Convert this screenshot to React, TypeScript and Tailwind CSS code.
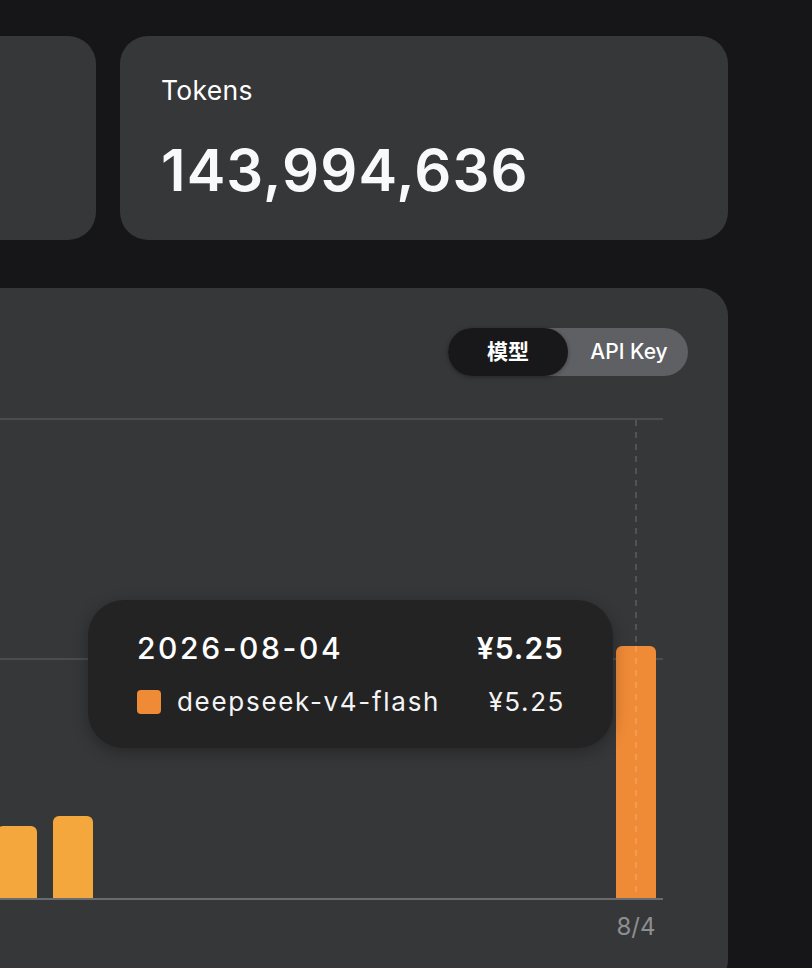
import React from "react";

export default function App() {
  return (
    <div
      className="w-[812px] h-[968px] overflow-hidden bg-[#161618] text-white"
      style={{ fontFamily: "Inter, 'Noto Sans CJK SC', sans-serif" }}
    >
      <div className="ml-[-512px] w-[1240px] pt-[36px] flex flex-col gap-[48px]">
        {/* Top stat cards */}
        <div className="flex gap-[24px]">
          <div className="w-[608px] h-[204px] rounded-[28px] bg-[#363739]" />
          <div className="w-[608px] h-[204px] rounded-[28px] bg-[#363739] pl-[41px] pt-[38px]">
            <div className="text-[26.5px] leading-[32px] font-normal text-white tracking-[0.3px]">Tokens</div>
            <div className="mt-[32px] text-[58px] leading-[64px] font-semibold text-[#f8f9fb] tracking-[1.1px]">
              143,994,636
            </div>
          </div>
        </div>

        {/* Chart card */}
        <div className="relative w-[1240px] h-[700px] rounded-[28px] bg-[#363739] pt-[40px]">
          <div className="flex justify-end pr-[40px]">
            <div className="flex h-[48px] rounded-full bg-[#5e6064]">
              <div className="w-[120px] h-[48px] rounded-full bg-[#18181a] shadow-[0_1px_4px_rgba(0,0,0,0.35)] flex items-center justify-center text-[21px] font-bold text-white">
                模型
              </div>
              <div className="w-[120px] h-[48px] flex items-center justify-center text-[21px] font-medium text-white pl-[2px]">
                API Key
              </div>
            </div>
          </div>

          <svg width="1240" height="540" className="block mt-[40px]">
            <rect x="0" y="2" width="1175" height="2" fill="#4b4c50" />
            <rect x="0" y="242" width="1175" height="2" fill="#4b4c50" />
            <line
              x1="1148"
              y1="4"
              x2="1148"
              y2="482"
              stroke="rgba(255,255,255,0.14)"
              strokeWidth="2"
              strokeDasharray="6 6"
            />
            <path d="M453 482 V416 a6 6 0 0 1 6 -6 h28 a6 6 0 0 1 6 6 V482 Z" fill="#f3a73d" />
            <path d="M509 482 V416 a6 6 0 0 1 6 -6 h28 a6 6 0 0 1 6 6 V482 Z" fill="#f3a73d" />
            <path d="M565 482 V406 a6 6 0 0 1 6 -6 h28 a6 6 0 0 1 6 6 V482 Z" fill="#f3a73d" />
            <path d="M1128 482 V236 a6 6 0 0 1 6 -6 h28 a6 6 0 0 1 6 6 V482 Z" fill="#ef8a37" />
            <line
              x1="1148"
              y1="230"
              x2="1148"
              y2="482"
              stroke="rgba(255,255,255,0.14)"
              strokeWidth="2"
              strokeDasharray="6 6"
            />
            <rect x="0" y="482" width="1175" height="2" fill="#6a6b6f" />
            <text
              x="1148"
              y="519"
              textAnchor="middle"
              fontSize="24"
              fill="#8d8e92"
              fontFamily="Inter, sans-serif"
            >
              8/4
            </text>
          </svg>

          {/* Tooltip */}
          <div className="absolute left-[600px] top-[312px] w-[525px] h-[148px] rounded-[36px] bg-[#232323] shadow-[0_4px_16px_rgba(0,0,0,0.3)] px-[49px] pt-[28px]">
            <div className="flex items-center justify-between text-[30px] leading-[40px] font-medium text-white">
              <span className="tracking-[2.6px]">2026-08-04</span>
              <span className="tracking-[1px] font-semibold">¥5.25</span>
            </div>
            <div className="mt-[16px] flex items-center justify-between text-[26px] leading-[36px] text-[#f4f4f5]">
              <div className="flex items-center gap-[16px]">
                <span className="w-[24px] h-[24px] rounded-[4px] bg-[#ef8a37]" />
                <span className="tracking-[1.7px]">deepseek-v4-flash</span>
              </div>
              <span className="tracking-[1.6px] -mr-[1px]">¥5.25</span>
            </div>
          </div>
        </div>
      </div>
    </div>
  );
}
